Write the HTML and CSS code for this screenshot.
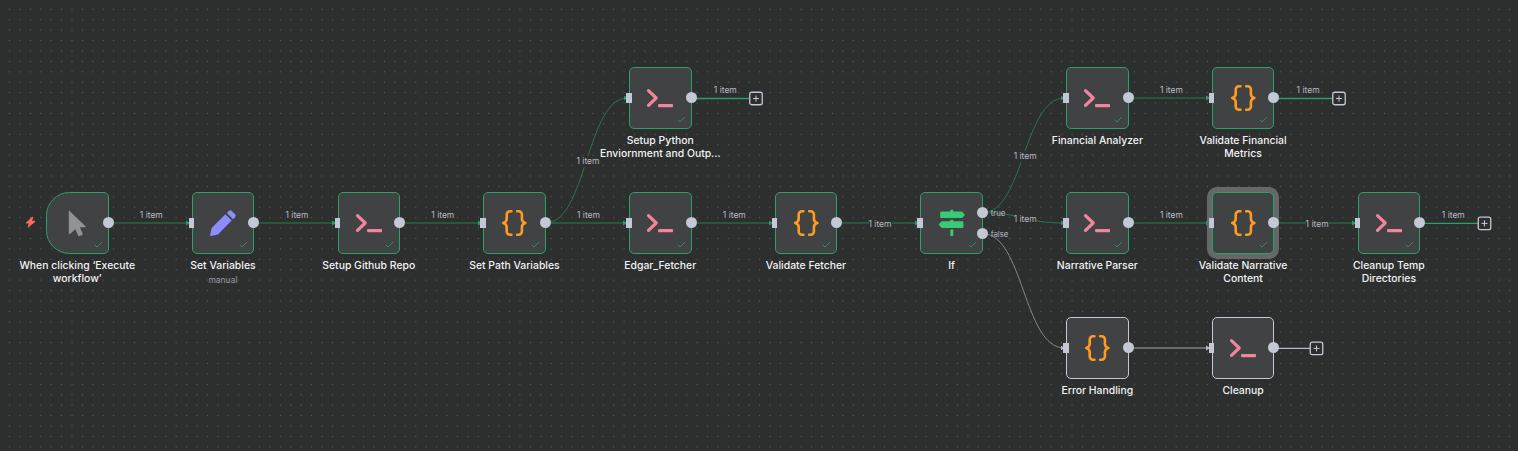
FILE: index.html
```html
<!DOCTYPE html>
<html lang="en">
<head>
<meta charset="utf-8">
<title>Workflow</title>
<link rel="stylesheet" href="styles.css">
</head>
<body>
<svg class="defs" width="0" height="0">
  <defs>
    <pattern id="dots" x="4.3" y="4.1" width="10.417" height="10.417" patternUnits="userSpaceOnUse"><circle cx="5.2" cy="5.2" r=".65" fill="#56585a"/></pattern>
    <symbol id="check" viewBox="0 0 9 7"><path d="M.8 3.8 3 6 8 1" fill="none" stroke="#2c8c5d" stroke-width="1"/></symbol>
    <symbol id="terminal" viewBox="0 0 26 26"><path d="M1.5 5.6 9.2 13 1.5 20.4" fill="none" stroke="#f2849e" stroke-width="3.2" stroke-linecap="round" stroke-linejoin="round"/><rect x="11.1" y="19" width="14.9" height="3.2" rx=".7" fill="#f2849e"/></symbol>
    <symbol id="braces" viewBox="0 0 26 26"><path d="M10.4 1.3H9a3.3 3.3 0 0 0-3.3 3.3v4.1c0 2.4-1.2 3.7-3.5 4.3 2.3.6 3.5 1.9 3.5 4.3v4.1a3.3 3.3 0 0 0 3.3 3.3h1.4M16.2 1.3h1.4a3.3 3.3 0 0 1 3.3 3.3v4.1c0 2.4 1.2 3.7 3.5 4.3-2.3.6-3.5 1.9-3.5 4.3v4.1a3.3 3.3 0 0 1-3.3 3.3h-1.4" fill="none" stroke="#ff9b22" stroke-width="2.6" stroke-linecap="round" stroke-linejoin="round"/></symbol>
    <symbol id="pencil" viewBox="0 0 26 26"><path d="M15.4 4.3 21.7 10.6 8.4 23.9Q7.7 24.6 6.8 24.8L1.3 26Q0 26.2.2 24.8L1.3 19.3Q1.5 18.3 2.2 17.6ZM16.8 2.9 18.8.9Q20.3-.5 21.8.9L25.1 4.2Q26.5 5.7 25.1 7.2L23.1 9.2Z" fill="#8b8dff"/></symbol>
    <symbol id="cursor" viewBox="0 0 26 26"><path d="M5.1.5 21.7 16.4Q22.1 17.1 21.2 17.2H15.9L18.7 23.8Q18.9 24.6 18.2 24.9L15.3 26.1Q14.5 26.3 14.1 25.6L11.3 19.2 6.2 23.8Q5 24.6 4.8 23.3V1Q4.8.3 5.1.5Z" fill="#919296"/></symbol>
    <symbol id="signpost" viewBox="0 0 26 26"><path d="M11.3 1.5V.3Q11.3-.3 11.9-.3H13.7Q14.3-.3 14.3.3V1.5H22.4Q23 1.5 23.4 1.9L25.6 4.3Q26 4.8 25.6 5.3L23.4 7.7Q23 8.1 22.4 8.1H2.4Q1.2 8.1 1.2 6.9V2.7Q1.2 1.5 2.4 1.5ZM11.3 9.7H14.3V11.3H23.2Q24.4 11.3 24.4 12.5V16.7Q24.4 17.9 23.2 17.9H3.2Q2.6 17.9 2.2 17.5L0 15.1Q-.4 14.6 0 14.1L2.2 11.7Q2.6 11.3 3.2 11.3H11.3ZM11.3 19.5H14.3V25.2Q14.3 26 13.5 26H12.1Q11.3 26 11.3 25.2Z" fill="#37cb73"/></symbol>
    <symbol id="plus" viewBox="0 0 14 14"><rect x=".75" y=".75" width="12.5" height="12.5" rx="2" fill="#2d2e2e" stroke="#c3c8d4" stroke-width="1.3"/><path d="M7 4v6M4 7h6" stroke="#c3c8d4" stroke-width="1"/></symbol>
    <marker id="tip" markerUnits="userSpaceOnUse" markerWidth="5" markerHeight="6" refX="4" refY="3" orient="auto"><path d="M0 .5 4.4 3 0 5.5Z" fill="#2b9c66"/></marker>
    <marker id="tip-idle" markerUnits="userSpaceOnUse" markerWidth="5" markerHeight="6" refX="4" refY="3" orient="auto"><path d="M0 .5 4.4 3 0 5.5Z" fill="#b5bac5"/></marker>
  </defs>
</svg>
<main class="canvas">
  <svg class="edges" viewBox="0 0 1518 451">
    <rect width="1518" height="451" fill="url(#dots)"/>
    <g class="straight">
      <path d="M108 223H190"/><path d="M254 223H336"/><path d="M400 223H482"/><path d="M545 223H627"/>
      <path d="M691 223H773"/><path d="M837 223H919"/><path d="M1128 223H1210"/><path d="M1274 223H1356"/><path d="M1128 98H1210"/>
    </g>
    <g class="curve">
      <path d="M545.5 223C586.5 223 586.5 98 627.5 98"/>
      <path d="M982.5 212.8C1023.5 212.8 1023.5 98 1064.5 98"/>
      <path d="M982.5 212.8C1023.5 212.8 1023.5 223 1064.5 223"/>
    </g>
    <g class="idle"><path d="M982.5 233.6C1023.5 233.6 1023.5 348 1064.5 348"/><path class="wide" d="M1128 348H1210"/></g>
    <g class="open"><path d="M691 98.5H749"/><path d="M1274 98.5H1332"/><path d="M1420 223.4H1478"/><path class="pale" d="M1274 348.4H1310"/></g>
    <use href="#plus" x="749" y="91.5" width="14" height="14"/>
    <use href="#plus" x="1332" y="91.5" width="14" height="14"/>
    <use href="#plus" x="1477.5" y="216.4" width="14" height="14"/>
    <use href="#plus" x="1309.5" y="341.4" width="14" height="14"/>
    <path d="M31.8 217 26.2 222.4Q25.6 223.3 26.5 223.5H28.9L27.6 226.8Q27.6 227.8 28.6 227.3L35 221.9Q35.6 221 34.7 220.8H32L33.3 217.7Q33.1 216.5 31.8 217Z" fill="#ff6957"/>
  </svg>

  <span class="count c0 above r1">1 item</span><span class="count c1 above r1">1 item</span>
  <span class="count c2 above r1">1 item</span><span class="count c3 above r1">1 item</span>
  <span class="count c4 above r1">1 item</span><span class="count c5 on r1">1 item</span>
  <span class="count c7 above r1">1 item</span><span class="count c8 on r1">1 item</span>
  <span class="count end2 above r1">1 item</span><span class="count end0 above r0">1 item</span>
  <span class="count c7 above r0">1 item</span><span class="count end1 above r0">1 item</span>
  <span class="count c3 branch-a">1 item</span><span class="count c6 branch-b">1 item</span><span class="count c6 branch-c">1 item</span>

  <section class="node trigger c0 r1"><div class="box"><svg class="icon"><use href="#cursor"/></svg><svg class="check"><use href="#check"/></svg><i class="out"></i></div><p>When clicking ‘Execute<br>workflow’</p></section>
  <section class="node c1 r1"><div class="box"><svg class="icon"><use href="#pencil"/></svg><svg class="check"><use href="#check"/></svg><i class="in"></i><i class="out"></i></div><p>Set Variables</p><small>manual</small></section>
  <section class="node c2 r1"><div class="box"><svg class="icon"><use href="#terminal"/></svg><svg class="check"><use href="#check"/></svg><i class="in"></i><i class="out"></i></div><p>Setup Github Repo</p></section>
  <section class="node c3 r1"><div class="box"><svg class="icon"><use href="#braces"/></svg><svg class="check"><use href="#check"/></svg><i class="in"></i><i class="out"></i></div><p>Set Path Variables</p></section>
  <section class="node c4 r0"><div class="box"><svg class="icon"><use href="#terminal"/></svg><svg class="check"><use href="#check"/></svg><i class="in"></i><i class="out"></i></div><p>Setup Python<br>Enviornment and Outp...</p></section>
  <section class="node c4 r1"><div class="box"><svg class="icon"><use href="#terminal"/></svg><svg class="check"><use href="#check"/></svg><i class="in"></i><i class="out"></i></div><p>Edgar_Fetcher</p></section>
  <section class="node c5 r1"><div class="box"><svg class="icon"><use href="#braces"/></svg><svg class="check"><use href="#check"/></svg><i class="in"></i><i class="out"></i></div><p>Validate Fetcher</p></section>
  <section class="node c6 r1"><div class="box"><svg class="icon"><use href="#signpost"/></svg><svg class="check"><use href="#check"/></svg><i class="in"></i><i class="out yes"></i><i class="out no"></i><b class="port yes">true</b><b class="port no">false</b></div><p>If</p></section>
  <section class="node c7 r0"><div class="box"><svg class="icon"><use href="#terminal"/></svg><svg class="check"><use href="#check"/></svg><i class="in"></i><i class="out"></i></div><p>Financial Analyzer</p></section>
  <section class="node c8 r0"><div class="box"><svg class="icon"><use href="#braces"/></svg><svg class="check"><use href="#check"/></svg><i class="in"></i><i class="out"></i></div><p>Validate Financial<br>Metrics</p></section>
  <section class="node c7 r1"><div class="box"><svg class="icon"><use href="#terminal"/></svg><svg class="check"><use href="#check"/></svg><i class="in"></i><i class="out"></i></div><p>Narrative Parser</p></section>
  <section class="node selected c8 r1"><div class="box"><svg class="icon"><use href="#braces"/></svg><svg class="check"><use href="#check"/></svg><i class="in"></i><i class="out"></i></div><p>Validate Narrative<br>Content</p></section>
  <section class="node c9 r1"><div class="box"><svg class="icon"><use href="#terminal"/></svg><svg class="check"><use href="#check"/></svg><i class="in"></i><i class="out"></i></div><p>Cleanup Temp<br>Directories</p></section>
  <section class="node waiting c7 r2"><div class="box"><svg class="icon"><use href="#braces"/></svg><i class="in"></i><i class="out"></i></div><p>Error Handling</p></section>
  <section class="node waiting c8 r2"><div class="box"><svg class="icon"><use href="#terminal"/></svg><i class="in"></i><i class="out"></i></div><p>Cleanup</p></section>
</main>
</body>
</html>
```
FILE: styles.css
```css
* { box-sizing: border-box; }
body { margin: 0; background: #2d2e2e; font-family: Inter, "Liberation Sans", sans-serif; }
.defs { position: absolute; }
.canvas { position: relative; width: 1518px; height: 451px; overflow: hidden; background: #2d2e2e; }
.edges { display: block; width: 1518px; height: 451px; }
.edges g { fill: none; }
.straight path { stroke: #29563f; stroke-width: 1.8; marker-end: url(#tip); }
.curve path { stroke: #2b7550; stroke-width: 1; marker-end: url(#tip); }
.idle path { stroke: #85878d; stroke-width: 1; marker-end: url(#tip-idle); }
.idle .wide { stroke: #67696d; stroke-width: 1.8; }
.open path { stroke: #2ba169; stroke-width: 1.4; }
.open .pale { stroke: #b5bac5; }

/* Grid columns and rows of the canvas */
.c0 { --x: 46px; }
.c1 { --x: 191.7px; }
.c2 { --x: 337.5px; }
.c3 { --x: 483.2px; }
.c4 { --x: 629px; }
.c5 { --x: 774.7px; }
.c6 { --x: 920.4px; }
.c7 { --x: 1066.1px; }
.c8 { --x: 1211.8px; }
.c9 { --x: 1357.6px; }
.r0 { --y: 67px; }
.r1 { --y: 192px; }
.r2 { --y: 317px; }
.end0 { --x: 620px; }
.end1 { --x: 1202.8px; }
.end2 { --x: 1348px; }

.node { position: absolute; left: var(--x); top: var(--y); width: 62.5px; display: flex; flex-direction: column; align-items: center; }
.box { position: relative; width: 62.5px; height: 62px; display: flex; align-items: center; justify-content: center; background: #414244; border: 1.3px solid #2ba169; border-radius: 5px; }
.trigger .box { border-radius: 23.5px 5px 5px 23.5px; }
.waiting .box { border-color: #c3c8d4; }
.selected .box { box-shadow: 0 0 0 5px #666768; }
.icon { width: 26px; height: 26px; overflow: visible; }
.icon use, symbol { overflow: visible; }
.check { position: absolute; right: 5px; bottom: 5.5px; width: 9px; height: 7px; }
.in { position: absolute; left: -4px; top: 25px; width: 5.6px; height: 10px; background: #c3c8d4; }
.out { position: absolute; right: -6.2px; top: 24.4px; width: 11px; height: 11px; border-radius: 50%; background: #c3c8d4; }
.out.yes { top: 14px; }
.out.no { top: 35px; }
.port { position: absolute; left: 69.3px; font-size: 7.8px; line-height: 9px; font-weight: 400; color: #b6bac4; }
.port.yes { top: 16px; }
.port.no { top: 37px; }
.node p { margin: 5px 0 0; font-size: 10.42px; line-height: 13px; font-weight: 450; color: #f2f3f5; text-align: center; white-space: nowrap; }
.node small { margin-top: 2px; font-size: 8.5px; line-height: 12px; color: #999ca2; }

.count { position: absolute; left: calc(var(--x) + 93.8px); font-size: 8.5px; line-height: 11px; color: #b8bbc2; background: #2d2e2e; white-space: nowrap; }
.above { top: calc(var(--y) + 17.5px); }
.on { top: calc(var(--y) + 26.5px); }
.branch-a { top: 155.5px; margin-left: -.5px; }
.branch-b { top: 150.5px; margin-left: -.5px; }
.branch-c { top: 213.5px; margin-left: -.5px; }
```
